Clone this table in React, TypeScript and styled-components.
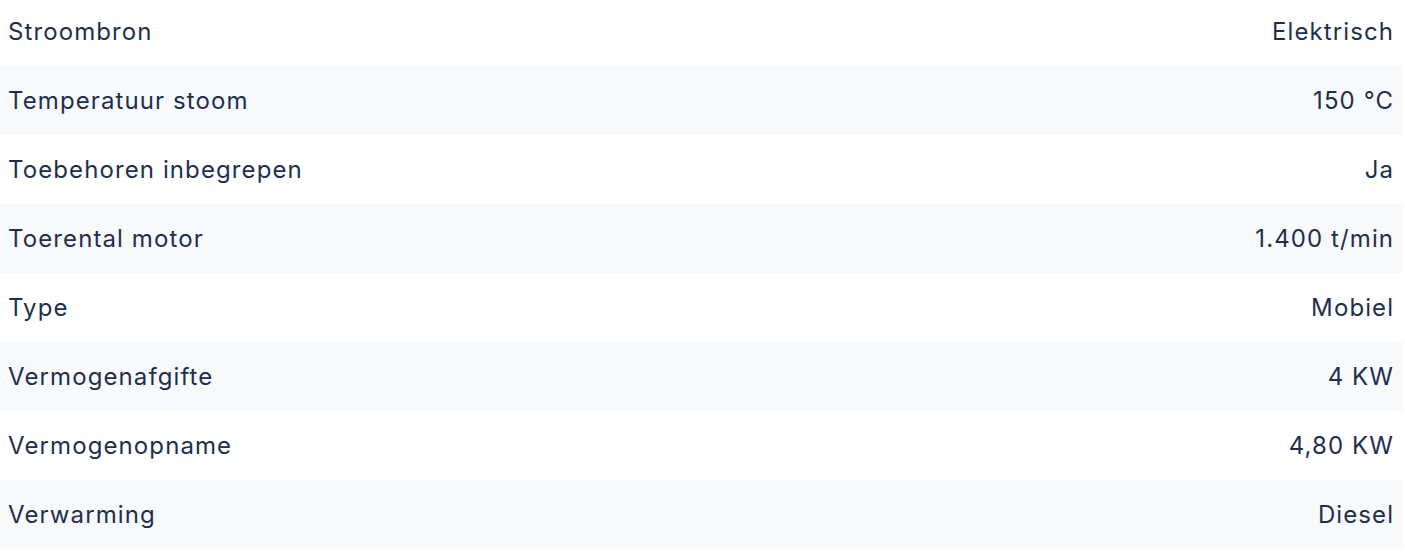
import React from "react";
import styled, { createGlobalStyle } from "styled-components";

const Global = createGlobalStyle`
  html, body { margin: 0; padding: 0; background: #ffffff; }
  body { font-family: Inter, "Noto Sans", sans-serif; overflow: hidden; }
`;

const Table = styled.div`
  width: 1403px;
  margin-top: -3px;
  display: flex;
  flex-direction: column;
`;

const Row = styled.div<{ $alt: boolean }>`
  height: 69px;
  display: flex;
  align-items: center;
  justify-content: space-between;
  padding: 0 10px 0 8px;
  box-sizing: border-box;
  background: ${(p) => (p.$alt ? "#f8f9fb" : "#ffffff")};
  color: #1e2f4e;
  font-size: 24px;
  font-weight: 400;
  letter-spacing: 1.1px;
`;

const Label = styled.span``;
const Value = styled.span`
  text-align: right;
  margin-right: -1.1px;
`;

const rows: [string, string][] = [
  ["Stroombron", "Elektrisch"],
  ["Temperatuur stoom", "150 °C"],
  ["Toebehoren inbegrepen", "Ja"],
  ["Toerental motor", "1.400 t/min"],
  ["Type", "Mobiel"],
  ["Vermogenafgifte", "4 KW"],
  ["Vermogenopname", "4,80 KW"],
  ["Verwarming", "Diesel"],
];

export default function App() {
  return (
    <>
      <Global />
      <Table>
        {rows.map(([l, v], i) => (
          <Row key={l} $alt={i % 2 === 1}>
            <Label>{l}</Label>
            <Value>{v}</Value>
          </Row>
        ))}
      </Table>
    </>
  );
}
